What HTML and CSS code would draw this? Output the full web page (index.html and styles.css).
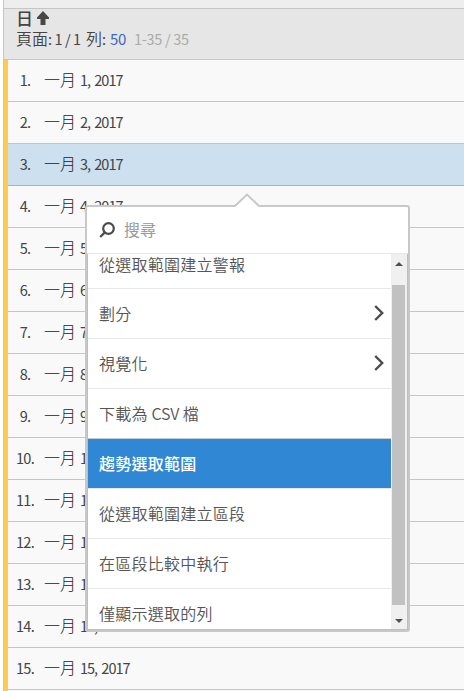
FILE: index.html
```html
<!DOCTYPE html>
<html lang="zh-Hant">
<head>
<meta charset="utf-8">
<title>日</title>
<link rel="stylesheet" href="styles.css">
</head>
<body>
<main class="report">
  <div class="topband"></div>
  <header class="head">
    <div class="sort"><b>日</b><svg class="up" viewBox="0 0 14 14"><path d="M7 0L13 6.5V8H9.5V14H4.5V8H1V6.5Z"/></svg></div>
    <div class="paging"><span class="page">頁面<span class="num-text">: 1 / 1</span></span><span class="rows-label">列<span class="num-text">:</span></span><a class="count">50</a><span class="range">1-35 / 35</span></div>
  </header>
  <div class="rows">
    <div class="row"><span class="num">1.</span><span class="cjk">一月</span><span class="date">1, 2017</span></div>
    <div class="row"><span class="num">2.</span><span class="cjk">一月</span><span class="date">2, 2017</span></div>
    <div class="row selected"><span class="num">3.</span><span class="cjk">一月</span><span class="date">3, 2017</span></div>
    <div class="row"><span class="num">4.</span><span class="cjk">一月</span><span class="date">4, 2017</span></div>
    <div class="row"><span class="num">5.</span><span class="cjk">一月</span><span class="date">5, 2017</span></div>
    <div class="row"><span class="num">6.</span><span class="cjk">一月</span><span class="date">6, 2017</span></div>
    <div class="row"><span class="num">7.</span><span class="cjk">一月</span><span class="date">7, 2017</span></div>
    <div class="row"><span class="num">8.</span><span class="cjk">一月</span><span class="date">8, 2017</span></div>
    <div class="row"><span class="num">9.</span><span class="cjk">一月</span><span class="date">9, 2017</span></div>
    <div class="row"><span class="num">10.</span><span class="cjk">一月</span><span class="date">10, 2017</span></div>
    <div class="row"><span class="num">11.</span><span class="cjk">一月</span><span class="date">11, 2017</span></div>
    <div class="row"><span class="num">12.</span><span class="cjk">一月</span><span class="date">12, 2017</span></div>
    <div class="row"><span class="num">13.</span><span class="cjk">一月</span><span class="date">13, 2017</span></div>
    <div class="row"><span class="num">14.</span><span class="cjk">一月</span><span class="date">14, 2017</span></div>
    <div class="row"><span class="num">15.</span><span class="cjk">一月</span><span class="date">15, 2017</span></div>
    <div class="row"></div>
  </div>
</main>
<div class="popup">
  <svg class="notch" viewBox="0 0 26 14"><path class="fill" d="M1 14L13 2L25 14Z"/><path class="edge" d="M1 13L13 1.6L25 13"/></svg>
  <div class="search"><svg class="lens" viewBox="0 0 16 16"><circle cx="9.5" cy="6.5" r="5.3"/><path d="M5.8 10.4L1.2 15"/></svg><span>搜尋</span></div>
  <div class="body">
    <div class="list">
      <div class="item first">從選取範圍建立警報</div>
      <div class="item">劃分<svg class="chev" viewBox="0 0 10 16"><path d="M1.2 1L8.2 8L1.2 15"/></svg></div>
      <div class="item">視覺化<svg class="chev" viewBox="0 0 10 16"><path d="M1.2 1L8.2 8L1.2 15"/></svg></div>
      <div class="item before">下載為&nbsp;<span class="latin">CSV</span>&nbsp;檔</div>
      <div class="item active">趨勢選取範圍</div>
      <div class="item">從選取範圍建立區段</div>
      <div class="item">在區段比較中執行</div>
      <div class="item last">僅顯示選取的列</div>
    </div>
    <div class="bar">
      <svg class="arr" viewBox="0 0 8 4"><path d="M0 4L4 0L8 4Z"/></svg>
      <div class="thumb"></div>
      <svg class="arr" viewBox="0 0 8 4"><path d="M0 0L4 4L8 0Z"/></svg>
    </div>
  </div>
</div>
</body>
</html>
```
FILE: styles.css
```css
* { box-sizing: border-box; }
body {
  margin: 0;
  width: 464px;
  height: 691px;
  overflow: hidden;
  position: relative;
  background: #fff;
  color: #444;
  font: 16px/20px "Noto Sans CJK TC", sans-serif;
}
.report {
  margin-left: 3px;
  height: 691px;
  overflow: hidden;
  border-left: 1px solid #c6c6c6;
}
.topband { height: 9px; background: #eee; border-bottom: 1px solid #c6c6c6; }
.head {
  height: 51px;
  background: #e6e6e6;
  border-bottom: 1px solid #c6c6c6;
  padding-left: 12px;
}
.sort { display: flex; height: 19px; line-height: 17px; }
.sort b { font-size: 17px; font-weight: 500; }
.up { width: 14px; height: 14px; margin: 2px 0 0 3px; fill: #484848; }
.paging { display: flex; align-items: baseline; white-space: pre; }
.page { width: 70px; font-weight: 350; }
.rows-label { width: 24px; font-weight: 350; }
.num-text, .count, .range, .num, .date { font-size: 14.5px; font-weight: 400; letter-spacing: -1px; }
.num-text { letter-spacing: -.4px; }
.count { width: 24px; color: #3b67c0; font-size: 15px; letter-spacing: -.3px; }
.range { color: #aaa; letter-spacing: -.3px; }
.rows { border-left: 4px solid #ffcb4f; }
.row {
  display: flex;
  align-items: baseline;
  height: 42px;
  padding-top: 9px;
  background: #f9f9f9;
  border-bottom: 1px solid #c6c6c6;
}
.selected { background: #cce0ef; border-color: #a0b5c9; }
.num { width: 34px; text-align: center; margin-right: 2px; letter-spacing: -.7px; }
.cjk { width: 36px; font-weight: 300; color: #222; }
.date { word-spacing: 2px; }
.popup {
  position: absolute;
  left: 85px;
  top: 205px;
  width: 325px;
  height: 427px;
  border: 2px solid #c8c8c8;
  border-radius: 3px;
  background: #fff;
}
.notch { position: absolute; left: 147px; top: -14px; width: 26px; height: 14px; }
.fill { fill: #fff; }
.edge { fill: none; stroke: #c8c8c8; stroke-width: 2; }
.search {
  display: flex;
  align-items: center;
  height: 47px;
  padding: 0 0 2px 12px;
  border-bottom: 1px solid #e6e6e6;
  color: #999;
}
.lens { width: 16px; height: 16px; margin: 2px 9px 0 0; fill: none; stroke: #4b4b4b; stroke-width: 2.2; }
.body {
  display: flex;
  height: 376px;
  border: solid #a9c0eb;
  border-width: 0 1px 1px;
}
.list {
  flex: 1;
  overflow: hidden;
  color: #555;
  font-weight: 350;
  letter-spacing: .25px;
}
.item {
  display: flex;
  align-items: center;
  height: 50px;
  padding: 0 7px 2px 11px;
  border-bottom: 1px solid #e8e8e8;
}
.first { height: 35px; padding-bottom: 15px; }
.before { border-color: #c4cdd6; }
.active { background: #3087d3; color: #fff; font-weight: 500; }
.last { border: 0; }
.latin { letter-spacing: -.3px; }
.chev { width: 10px; height: 16px; margin: 1px 0 0 auto; fill: none; stroke: #4b4b4b; stroke-width: 2.4; }
.bar {
  display: flex;
  flex-direction: column;
  align-items: center;
  justify-content: space-between;
  width: 16px;
  padding: 8px 1px 6px 0;
  background: #f0f0f0;
}
.thumb { width: 13px; height: 320px; margin-bottom: -4px; background: #c1c1c1; }
.arr { width: 8px; height: 4px; fill: #505050; }
```
